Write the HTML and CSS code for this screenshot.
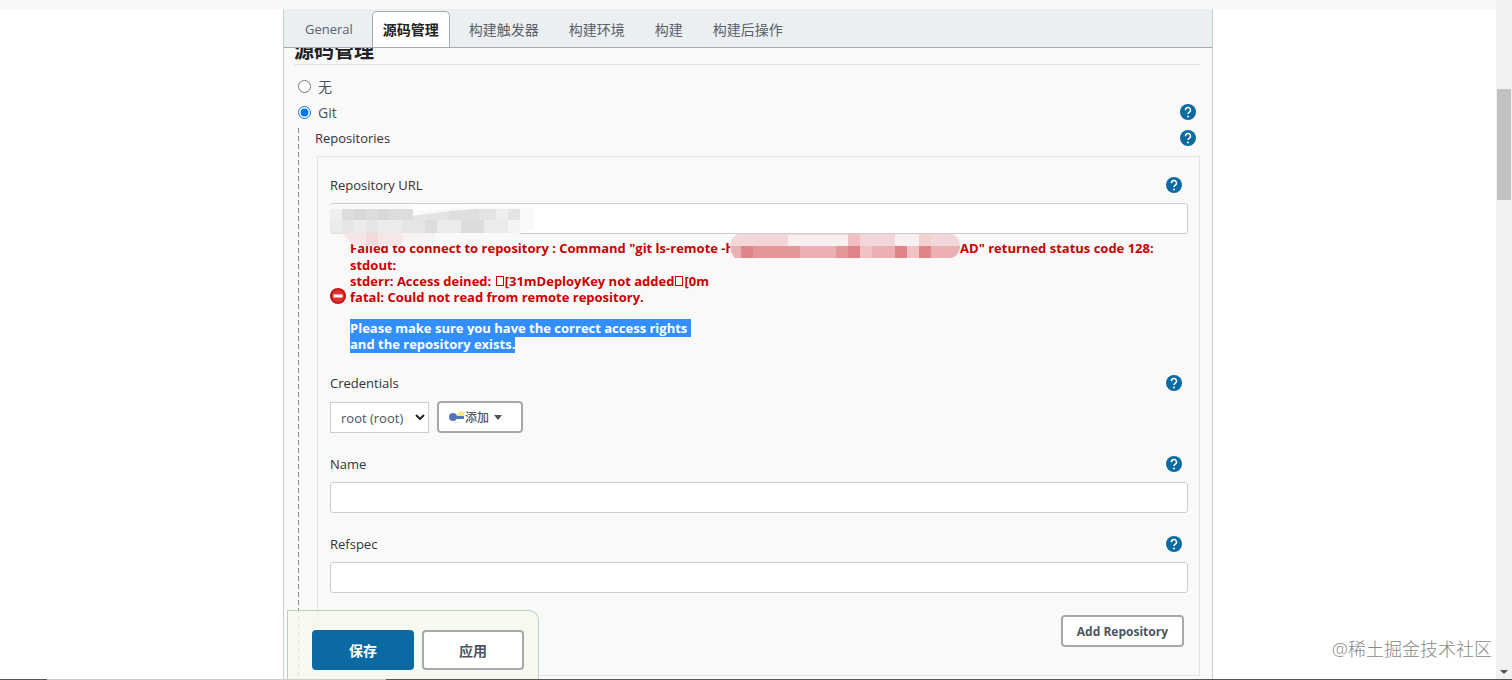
FILE: index.html
```html
<!DOCTYPE html>
<html lang="zh-CN">
<head>
  <meta charset="UTF-8">
  <meta name="viewport" content="width=device-width,initial-scale=1">
  <title>源码管理</title>
  <link rel="stylesheet" href="styles.css">
</head>
<body>
  <svg class="defs" aria-hidden="true">
    <symbol id="help" viewBox="0 0 16 16">
      <circle cx="8" cy="8" r="8" fill="#0b6aa2"/>
      <path d="M5.5 6.2a2.5 2.5 0 1 1 3.8 1.9C8.4 8.7 8 9 8 10.1" fill="none" stroke="#fff" stroke-width="1.5"/>
      <circle cx="8" cy="12.4" r="1" fill="#fff"/>
    </symbol>
  </svg>

  <div class="app">
    <div class="page">
      <div class="top-strip"></div>
      <div class="panel">
        <nav class="tabs">
          <a href="#general" class="tab latin">General</a>
          <a href="#scm" class="tab active">源码管理</a>
          <a href="#triggers" class="tab">构建触发器</a>
          <a href="#env" class="tab">构建环境</a>
          <a href="#build" class="tab">构建</a>
          <a href="#post" class="tab">构建后操作</a>
        </nav>

        <form class="config">
          <h2>源码管理</h2>

          <div class="radio-row">
            <input type="radio" name="scm" id="scmNone">
            <label for="scmNone">无</label>
          </div>
          <div class="radio-row">
            <input type="radio" name="scm" id="scmGit" checked>
            <label for="scmGit">Git</label>
            <button type="button" class="help" aria-label="Help"><svg><use href="#help"/></svg></button>
          </div>

          <div class="nested">
            <div class="row repos-title">
              <span>Repositories</span>
              <button type="button" class="help" aria-label="Help"><svg><use href="#help"/></svg></button>
            </div>

            <div class="repo">
              <!-- Repository URL -->
              <div class="row">
                <label for="repoUrl">Repository URL</label>
                <button type="button" class="help" aria-label="Help"><svg><use href="#help"/></svg></button>
              </div>
              <div class="url-field">
                <input type="text" id="repoUrl">
                <svg class="mask-url" viewBox="0 0 204 44" aria-hidden="true">
                  <path d="M0 0h80v6q60-6 124-2v20l-14 4v1H16L0 28z" fill="#f9f9f9"/>
                  <path d="M0 4h12v11H0z" fill="#efefef"/>
                  <path d="M12 4h71v11H12z" fill="#dcdcdc"/>
                  <path d="M24 4h12v11H24zM48 4h11v11H48z" fill="#d8d8d8"/>
                  <path d="M83 11q30-5 66-7h41v11H83z" fill="#e4e4e4"/>
                  <path d="M119 6l30-2v11h-30z" fill="#dedede"/>
                  <path d="M166 4h12v11h-12z" fill="#eee"/>
                  <path d="M0 15h190v13H0z" fill="#ebebeb"/>
                  <path d="M12 15h12v13H12zM36 15h12v13H36zM72 15h23v13H72z" fill="#e5e5e5"/>
                  <path d="M95 15h12v13H95zM131 15h23v13h-23z" fill="#dcdcdc"/>
                  <path d="M178 15h12v13h-12z" fill="#f4f4f4"/>
                  <path d="M12 28h60v9q-4 4-10 4H24z" fill="#f6e6e6"/>
                  <path d="M36 28h12v12H36z" fill="#f2dadb"/>
                  <path d="M72 28h32v8H72z" fill="#f8f2f2"/>
                </svg>
              </div>

              <div class="error">
                <svg class="error-icon" viewBox="0 0 16 16">
                  <circle cx="8" cy="8" r="8" fill="#c81414"/>
                  <circle cx="8" cy="8" r="6" fill="#e03434"/>
                  <path d="M3.5 6.5h9v3h-9z" fill="#fff"/>
                </svg>
                <div class="error-text">
                  <p class="first">Failed to connect to repository : Command "git ls-remote -h<svg class="mask-cmd" viewBox="0 0 230 24" aria-hidden="true">
                      <path d="M8 0h214q8 3 8 12t-8 12H5Q0 20 0 12T8 0z" fill="#f3d6d8"/>
                      <path d="M58 1h60v11H58zM165 0h24v12h-24z" fill="#f8f0f0"/>
                      <path d="M118 0h12v12h-12z" fill="#efbfc2"/>
                      <path d="M189 1h12v11h-12z" fill="#f2d0d2"/>
                      <path d="M1 12h229q-1 9-8 12H5Q1 20 1 12z" fill="#eab0b3"/>
                      <path d="M11 12h59v12H11zM106 12h12v12h-12z" fill="#e59699"/>
                      <path d="M11 12h12v12H11zM118 12h12v12h-12zM165 12h12v12h-12zM189 12h12v12h-12z" fill="#df8488"/>
                      <path d="M130 12h12v12h-12zM177 12h12v12h-12z" fill="#f0c2c4"/>
                    </svg>AD" returned status code 128:</p>
                  <p>stdout:</p>
                  <p>stderr: Access deined: <i class="esc"></i>[31mDeployKey not added<i class="esc"></i>[0m</p>
                  <p>fatal: Could not read from remote repository.</p>
                  <p class="gap"><mark>Please make sure you have the correct access rights </mark></p>
                  <p><mark>and the repository exists.</mark></p>
                </div>
              </div>

              <!-- Credentials -->
              <div class="row">
                <label for="credentials">Credentials</label>
                <button type="button" class="help" aria-label="Help"><svg><use href="#help"/></svg></button>
              </div>
              <div class="credentials">
                <div class="select">
                  <select id="credentials"><option>root (root)</option></select>
                  <svg class="chevron" viewBox="0 0 10 6"><path d="M1 1l4 4 4-4" fill="none" stroke="#222" stroke-width="2"/></svg>
                </div>
                <button type="button" class="btn add">
                  <svg class="key" viewBox="0 0 15 13">
                    <path d="M8 3l4-3 3 1v4H8z" fill="#f3ea7a"/>
                    <circle cx="4" cy="6" r="4" fill="#5573b8"/>
                    <path d="M6 5h9v3H6z" fill="#4f79b5"/>
                    <path d="M4 11h8v1H4z" fill="#e8e8e8"/>
                  </svg>添加<i class="caret"></i>
                </button>
              </div>

              <div class="row">
                <label for="name">Name</label>
                <button type="button" class="help" aria-label="Help"><svg><use href="#help"/></svg></button>
              </div>
              <input type="text" id="name">

              <div class="row">
                <label for="refspec">Refspec</label>
                <button type="button" class="help" aria-label="Help"><svg><use href="#help"/></svg></button>
              </div>
              <input type="text" id="refspec">

              <div class="repo-footer">
                <button type="button" class="btn">Add Repository</button>
              </div>
            </div>
          </div>
        </form>

        <div class="save-bar">
          <button type="button" class="save">保存</button>
          <button type="button" class="apply">应用</button>
        </div>
      </div>
      <div class="watermark">@稀土掘金技术社区</div>
    </div>

    <div class="scrollbar">
      <div class="thumb"></div>
      <i class="arrow"></i>
    </div>
  </div>
  <div class="bottom-line"></div>
</body>
</html>
```
FILE: styles.css
```css
* { box-sizing: border-box; }
body {
  display: flex;
  flex-direction: column;
  height: 100vh;
  margin: 0;
  overflow: hidden;
  background: #fff;
  color: #333;
  font-family: "Open Sans", "Noto Sans CJK SC", sans-serif;
  font-size: 14px;
}
.defs { position: absolute; width: 0; height: 0; }
.app { display: flex; flex: 1; min-height: 0; }
.page { position: relative; display: flex; flex-direction: column; flex: 1; min-width: 0; }
.top-strip { flex: none; height: 9px; background: #f8f8f8; }
.panel {
  position: relative;
  display: flex;
  flex-direction: column;
  flex: 1;
  min-height: 0;
  width: 100%;
  max-width: 930px;
  margin: 0 auto;
  background: #f9f9f9;
  border: solid #ccc;
  border-width: 0 1px;
}

/* Tabs */
.tabs {
  position: relative;
  display: flex;
  flex: none;
  height: 39px;
  padding: 2px 10px 0;
  background: #eaeff2;
  border-bottom: 1px solid #a5acae;
}
.tab {
  height: 36px;
  padding: 0 10px;
  border: 1px solid transparent;
  border-bottom: 0;
  line-height: 35px;
  color: #5a6068;
  text-decoration: none;
}
.tab + .tab { margin-left: 8px; }
.tab.active {
  background: #fff;
  border-color: #a5acae;
  border-radius: 5px 5px 0 0;
  color: #222;
  font-weight: bold;
}
.latin { font-size: 13px; }

.config { flex: 1; min-height: 0; padding: 0 12px 0 10px; overflow: hidden; }
h2 {
  height: 28px;
  margin: -11px 0 8px;
  border-bottom: 1px solid #e3e3e3;
  font-size: 20px;
  line-height: 28px;
  color: #222;
}
.radio-row { display: flex; align-items: center; height: 26px; padding: 0 4px; color: #4d545d; }
.radio-row input { width: 13px; height: 13px; margin: 0 7px 0 0; }
.radio-row .help { margin-left: auto; }
.help { flex: none; width: 16px; height: 16px; padding: 0; border: 0; background: none; cursor: pointer; }
.help svg { display: block; width: 16px; height: 16px; }

.nested {
  padding-left: 18px;
  background: repeating-linear-gradient(transparent 0 3px, #888 3px 8px) 4px 0 / 1px 100% no-repeat;
}
.row {
  display: flex;
  align-items: center;
  justify-content: space-between;
  height: 22px;
  padding-right: 6px;
  font-size: 13px;
  font-weight: 500;
}
.repos-title { height: 26px; padding: 0 4px 0 3px; }
.repo { margin: 5px 0 0 5px; padding: 17px 11px 28px 12px; border: 1px solid #e3e3e3; }
.repo > .row { margin-bottom: 7px; }
input[type="text"] {
  display: block;
  width: 100%;
  height: 31px;
  margin-bottom: 20px;
  border: 1px solid #ccc;
  border-radius: 3px;
  background: #fff;
}
.url-field { position: relative; }
.url-field input[type="text"] { margin-bottom: 5px; }
.mask-url { position: absolute; top: 2px; left: 0; z-index: 1; width: 204px; height: 44px; }

/* Error message */
.error { display: flex; align-items: center; margin-bottom: 20px; color: #c00; font-size: 13px; font-weight: bold; }
.error-icon { flex: none; width: 16px; height: 16px; margin-right: 4px; }
.error p { margin: 0; line-height: 16px; white-space: pre; }
.error .first { line-height: 18px; }
.error .gap { margin-top: 15px; }
/* covers the last letter before it */
.mask-cmd { width: 230px; height: 24px; margin: -12px 0 -4px -4px; vertical-align: middle; }
.esc { display: inline-block; width: 8px; height: 10px; margin: 0 1px; border: 1px solid #c00; }
mark { background: #338fff; color: #fff; }

/* Buttons */
.credentials { display: flex; align-items: center; gap: 8px; margin-bottom: 20px; }
.select { position: relative; }
select {
  appearance: none;
  display: block;
  width: 99px;
  height: 31px;
  padding: 2px 10px 0;
  border: 1px solid #ccc;
  border-radius: 0;
  background: #fff;
  color: #4d545d;
  font: inherit;
  font-size: 13px;
}
.chevron { position: absolute; top: 12px; right: 4px; width: 10px; height: 6px; }
.btn {
  height: 32px;
  padding: 0 14px;
  border: 2px solid #a5a9ad;
  border-radius: 4px;
  background: #fff;
  color: #4d545d;
  font: bold 12px "Open Sans", "Noto Sans CJK SC", sans-serif;
}
.add { display: flex; align-items: center; width: 86px; padding: 0 10px; font-weight: 500; }
.key { width: 15px; height: 13px; margin-right: 1px; }
.caret { margin-left: 5px; border: 4px solid transparent; border-top: 5px solid #4d545d; border-bottom: 0; }
.repo-footer { display: flex; justify-content: flex-end; padding: 2px 4px 0 0; }

/* Save / apply */
.save-bar {
  position: absolute;
  bottom: 0;
  left: 3px;
  z-index: 2;
  display: flex;
  gap: 8px;
  padding: 19px 14px 9px 24px;
  border: 1px solid #bfd0bf;
  border-bottom: 0;
  border-radius: 0 10px 0 0;
  background: rgba(245, 249, 239, 0.85);
}
.save, .apply {
  width: 102px;
  height: 40px;
  border: 2px solid #a5a9ad;
  border-radius: 4px;
  background: #fff;
  color: #4d545d;
  font: bold 14px "Open Sans", "Noto Sans CJK SC", sans-serif;
}
.save { background: #0b6aa2; border-color: #0b6aa2; color: #fff; }

.watermark { position: absolute; right: 4px; bottom: 17px; font-size: 18px; line-height: 26px; color: #888; font-weight: 300; }

.scrollbar { display: flex; flex-direction: column; flex: none; width: 16px; padding: 89px 1px 5px; background: #f1f1f1; }
.thumb { height: 111px; background: #c1c1c1; }
.arrow { margin: auto auto 0; border: 4px solid transparent; border-top-color: #505050; border-bottom: 0; }
.bottom-line { flex: none; height: 1px; background: linear-gradient(90deg, #555 0 47px, #ccc 47px 386px, #555 386px); }
```
